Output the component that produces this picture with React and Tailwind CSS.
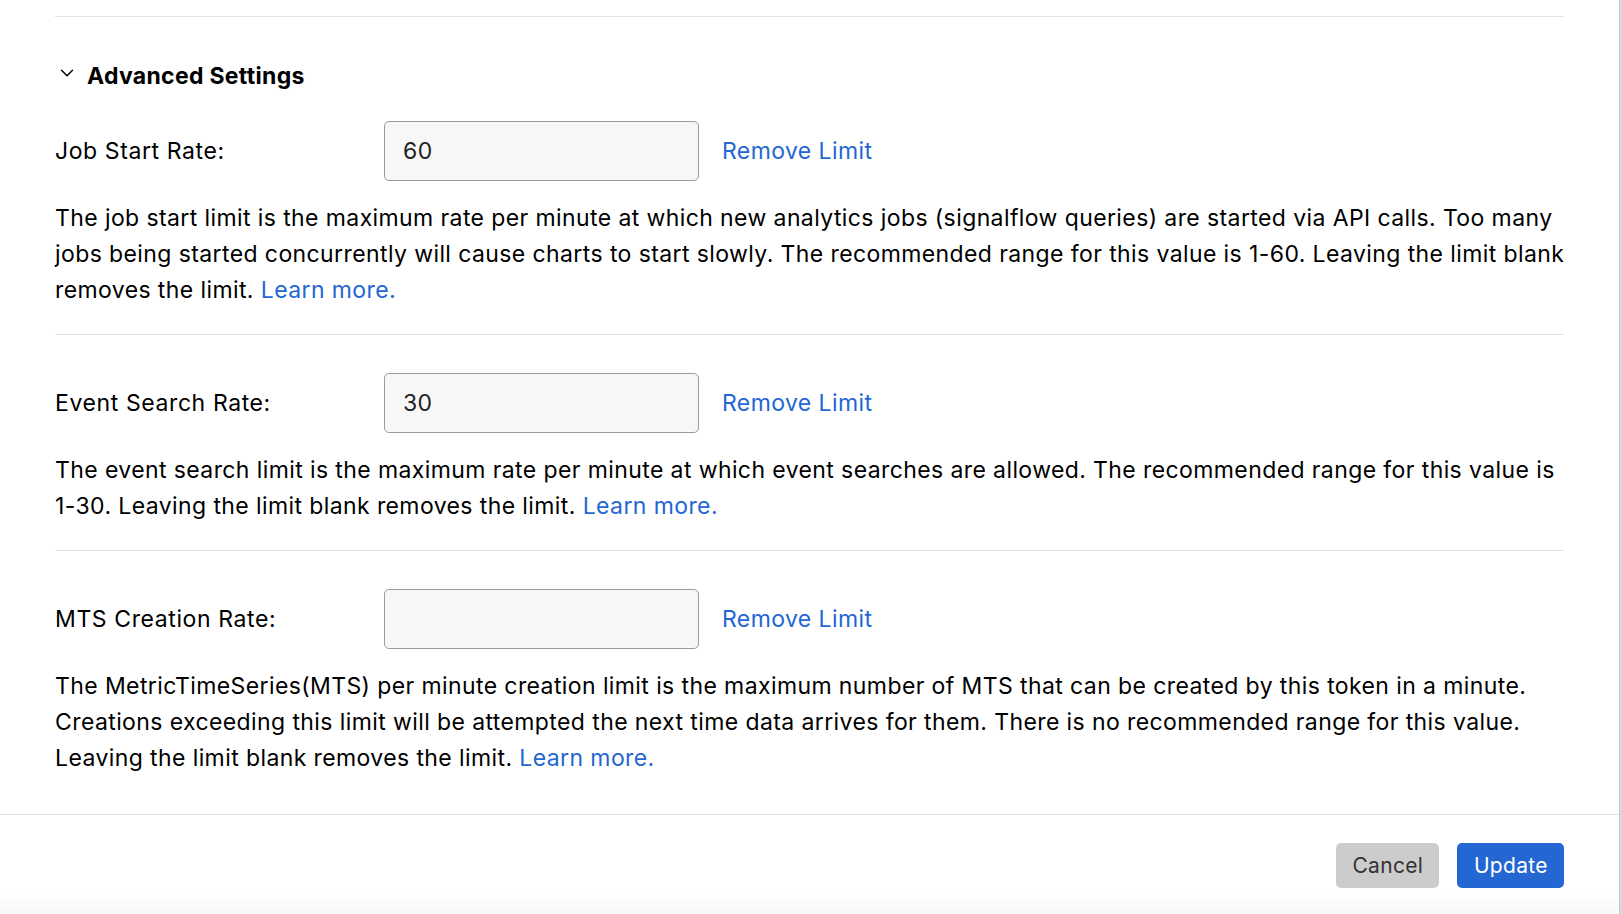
import { ChevronDown } from "lucide-react";

const rows = [
  {
    label: "Job Start Rate:",
    value: "60",
    lines: [
      "The job start limit is the maximum rate per minute at which new analytics jobs (signalflow queries) are started via API calls. Too many",
      "jobs being started concurrently will cause charts to start slowly. The recommended range for this value is 1-60. Leaving the limit blank",
      "removes the limit.",
    ],
  },
  {
    label: "Event Search Rate:",
    value: "30",
    lines: [
      "The event search limit is the maximum rate per minute at which event searches are allowed. The recommended range for this value is",
      "1-30. Leaving the limit blank removes the limit.",
    ],
  },
  {
    label: "MTS Creation Rate:",
    value: "",
    lines: [
      "The MetricTimeSeries(MTS) per minute creation limit is the maximum number of MTS that can be created by this token in a minute.",
      "Creations exceeding this limit will be attempted the next time data arrives for them. There is no recommended range for this value.",
      "Leaving the limit blank removes the limit.",
    ],
  },
];

const LimitRow = ({ row, last }) => (
  <div className={`${last ? "" : "border-b border-[#e2e2e2]"} pt-[38px] pb-[26px]`}>
    <div className="flex items-center">
      <label className="w-[329px] text-[23px] tracking-[0.6px] text-black">{row.label}</label>
      <input
        type="text"
        defaultValue={row.value}
        className="w-[315px] h-[60px] px-[18px] text-[23px] tracking-[0.4px] text-[#222] bg-[#f7f7f7] border border-[#9b9b9b] rounded-[5px] outline-none"
      />
      <button className="ml-[23px] text-[23px] tracking-[0.4px] text-[#2466d2]">Remove Limit</button>
    </div>
    <p className="mt-[19px] text-[23px] tracking-[0.4px] leading-[36px] text-black whitespace-nowrap">
      {row.lines.map((line, i) => (
        <span key={i}>
          {line}
          {i < row.lines.length - 1 ? <br /> : " "}
        </span>
      ))}
      <a className="text-[#2466d2]">Learn more.</a>
    </p>
  </div>
);

export default function App() {
  return (
    <div
      className="h-[914px] w-full flex bg-[#d9d9d9]"
      style={{ fontFamily: "Inter, 'Noto Sans', sans-serif" }}
    >
      <div className="flex-1 flex flex-col bg-white border-r border-[#c8c8c8]">
        <div className="px-[55px] pt-4">
          <div className="border-t border-[#e2e2e2]" />
          <div className="mt-[44px] flex items-center">
            <ChevronDown className="w-[22px] h-[22px] ml-[1px] mr-[9px] -mt-[6px] text-black" strokeWidth={1.6} />
            <h2 className="text-[23px] font-bold tracking-[0.3px] leading-[30px] text-black">Advanced Settings</h2>
          </div>
          <div className="-mt-[8px]">
            {rows.map((row, i) => (
              <LimitRow key={row.label} row={row} last={i === rows.length - 1} />
            ))}
          </div>
        </div>
        <div className="mt-[12px] border-t border-[#e2e2e2] flex-1 flex justify-end items-start pt-[28px] pr-[55px] gap-[18px] bg-gradient-to-b from-white from-80% to-[#f8f8f8]">
          <button className="h-[45px] w-[103px] rounded-[5px] bg-[#cccccc] text-[21px] tracking-[0.3px] text-[#333]">Cancel</button>
          <button className="h-[45px] w-[107px] rounded-[5px] bg-[#2466d2] text-[21px] tracking-[0.3px] text-white">Update</button>
        </div>
      </div>
      <div className="w-[3px]" />
    </div>
  );
}
